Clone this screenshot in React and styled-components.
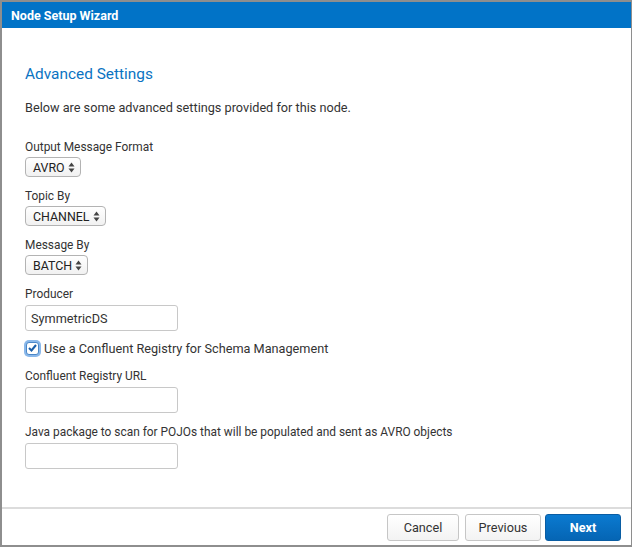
import React from "react";
import styled, { createGlobalStyle } from "styled-components";

const GlobalStyle = createGlobalStyle`
  html, body { margin: 0; padding: 0; background: #8e8e8e; }
  body { font-family: Roboto, "Liberation Sans", Arial, sans-serif; color: #333; }
`;

const Dialog = styled.div`
  width: 629px;
  height: 543px;
  margin: 2px 1px 2px 2px;
  background: #fff;
  display: flex;
  flex-direction: column;
`;

const TitleBar = styled.div`
  height: 26px;
  background: #0173c7;
  color: #fff;
  font-weight: 700;
  font-size: 12.5px;
  display: flex;
  align-items: center;
  padding-left: 9px;
`;

const Content = styled.div`
  flex: 1;
  padding: 36px 23px 0 23px;
  display: flex;
  flex-direction: column;
`;

const Heading = styled.h2`
  margin: 0;
  font-size: 15.4px;
  font-weight: 400;
  color: #0b73c2;
  line-height: 20px;
`;

const Intro = styled.p`
  margin: 16px 0 24px;
  font-size: 12.7px;
  line-height: 16px;
  color: #333;
`;

const Field = styled.div`
  display: flex;
  flex-direction: column;
  align-items: flex-start;
  margin-bottom: ${(p) => (p.$gap === undefined ? 12 : p.$gap)}px;
`;

const Label = styled.label`
  font-size: 11.9px;
  line-height: 14px;
  color: #333;
  margin-bottom: ${(p) => p.$space || 3}px;
`;

const Select = styled.div`
  display: inline-flex;
  align-items: center;
  height: 18px;
  padding: 0 5px 0 7px;
  border: 1px solid #b3b3b3;
  border-radius: 4px;
  background: linear-gradient(#fff, #f1f1f1);
  font-size: 12.4px;
  color: #222;
  gap: 3px;
`;

const Input = styled.div`
  width: 141px;
  height: 24px;
  border: 1px solid #c8c8c8;
  border-radius: 3px;
  padding: 0 5px;
  display: flex;
  align-items: center;
  font-size: 12.7px;
  color: #333;
`;

const CheckRow = styled.div`
  display: flex;
  align-items: center;
  height: 16px;
  gap: 5px;
  font-size: 12.7px;
  color: #333;
  margin: 9px 0 13px 0;
`;

const Box = styled.span`
  width: 11px;
  height: 11px;
  border: 1px solid #4a87c8;
  border-radius: 3px;
  box-shadow: 0 0 0 2px #8ab8ea;
  display: flex;
  align-items: center;
  justify-content: center;
  background: #fff;
  margin-left: 1px;
`;

const Footer = styled.div`
  height: 36px;
  border-top: 2px solid #dcdcdc;
  display: flex;
  justify-content: flex-end;
  align-items: center;
  gap: 4px;
  padding-right: 10px;
`;

const Button = styled.button`
  height: 27px;
  width: ${(p) => p.$w}px;
  margin-right: ${(p) => p.$mr || 0}px;
  border-radius: 3px;
  font-family: inherit;
  font-size: 12.7px;
  border: 1px solid ${(p) => (p.$primary ? "#0a5da3" : "#c6c6c6")};
  background: ${(p) => (p.$primary ? "linear-gradient(#0b7ad0, #0565b4)" : "linear-gradient(#fff, #f3f3f3)")};
  color: ${(p) => (p.$primary ? "#fff" : "#333")};
  font-weight: ${(p) => (p.$primary ? 700 : 400)};
  padding: 0;
`;

const Arrows = () => (
  <svg width="7" height="11" viewBox="0 0 7 11">
    <path d="M3.5 0.5 L6.5 4.5 H0.5 Z" fill="#444" />
    <path d="M3.5 10.5 L6.5 6.5 H0.5 Z" fill="#444" />
  </svg>
);

const DropDown = ({ value }) => (
  <Select>
    {value}
    <Arrows />
  </Select>
);

const App = () => (
  <>
    <GlobalStyle />
    <Dialog>
      <TitleBar>Node Setup Wizard</TitleBar>
      <Content>
        <Heading>Advanced Settings</Heading>
        <Intro>Below are some advanced settings provided for this node.</Intro>
        <Field>
          <Label>Output Message Format</Label>
          <DropDown value="AVRO" />
        </Field>
        <Field>
          <Label>Topic By</Label>
          <DropDown value="CHANNEL" />
        </Field>
        <Field>
          <Label>Message By</Label>
          <DropDown value="BATCH" />
        </Field>
        <Field $gap={0}>
          <Label $space={4}>Producer</Label>
          <Input>SymmetricDS</Input>
        </Field>
        <CheckRow>
          <Box>
            <svg width="9" height="8" viewBox="0 0 9 8">
              <path d="M1 4 L3.5 6.5 L8 1" stroke="#1a5ea8" strokeWidth="2" fill="none" />
            </svg>
          </Box>
          Use a Confluent Registry for Schema Management
        </CheckRow>
        <Field>
          <Label $space={4}>Confluent Registry URL</Label>
          <Input />
        </Field>
        <Field>
          <Label $space={4}>Java package to scan for POJOs that will be populated and sent as AVRO objects</Label>
          <Input />
        </Field>
      </Content>
      <Footer>
        <Button $w={72} $mr={2}>Cancel</Button>
        <Button $w={76}>Previous</Button>
        <Button $w={76} $primary>Next</Button>
      </Footer>
    </Dialog>
  </>
);

export default App;
